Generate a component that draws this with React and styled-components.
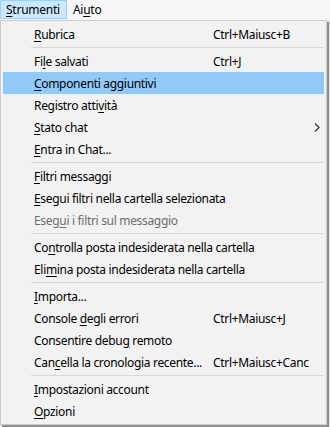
import React from "react";
import styled, { createGlobalStyle } from "styled-components";

const Global = createGlobalStyle`
  html, body { margin: 0; padding: 0; background: #ffffff; }
  body { font-family: "Noto Sans", "Open Sans", sans-serif; font-size: 12px; color: #000; }
`;

const Page = styled.div`
  width: 330px;
  height: 427px;
  overflow: hidden;
  background: #f0f0f0;
`;

const MenuBar = styled.div`
  display: flex;
  height: 20px;
  background: #f5f6f7;
  align-items: stretch;
`;

const BarItem = styled.div`
  display: flex;
  align-items: center;
  padding: 0 6px 0 5px;
  height: 19px;
  box-sizing: border-box;
  background: ${(p) => (p.$active ? "#cce8ff" : "transparent")};
  border: 1px solid ${(p) => (p.$active ? "#99d1ff" : "transparent")};
  letter-spacing: -0.25px;
`;

const Panel = styled.div`
  width: 327px;
  box-sizing: border-box;
  background: #f2f2f2;
  border: 1px solid #cccccc;
  padding: 2px 2px;
  box-shadow: 2px 2px 1px rgba(0, 0, 0, 0.4);
`;

const Item = styled.div`
  display: grid;
  grid-template-columns: 31px 179px 1fr 16px;
  align-items: center;
  height: 22px;
  color: ${(p) => (p.$disabled ? "#6d6d6d" : "#000")};
  background: ${(p) => (p.$hl ? "#91c9f7" : "transparent")};
  letter-spacing: -0.32px;
  white-space: nowrap;
`;

const Label = styled.span`
  grid-column: 2;
  overflow: visible;
`;

const Shortcut = styled.span`
  grid-column: 3;
`;

const Arrow = styled.span`
  grid-column: 4;
  display: flex;
  align-items: center;
  padding-left: 6px;
`;

const Sep = styled.div`
  height: 5px;
  display: flex;
  align-items: flex-start;
  padding: 2px 0 0 28px;
  box-sizing: border-box;
  &::after {
    content: "";
    flex: 1;
    height: 1px;
    background: #d7d7d7;
  }
`;

const U = styled.span`
  text-decoration: underline;
  text-underline-offset: 2px;
`;

const items = [
  { l: ["", "R", "ubrica"], s: "Ctrl+Maiusc+B" },
  "sep",
  { l: ["Fi", "l", "e salvati"], s: "Ctrl+J" },
  { l: ["", "C", "omponenti aggiuntivi"], hl: true },
  { l: ["Registro atti", "v", "ità"] },
  { l: ["", "S", "tato chat"], arrow: true },
  { l: ["", "E", "ntra in Chat..."] },
  "sep",
  { l: ["", "F", "iltri messaggi"] },
  { l: ["", "E", "segui filtri nella cartella selezionata"] },
  { l: ["Eseg", "u", "i i filtri sul messaggio"], d: true },
  "sep",
  { l: ["Co", "n", "trolla posta indesiderata nella cartella"] },
  { l: ["Eli", "m", "ina posta indesiderata nella cartella"] },
  "sep",
  { l: ["", "I", "mporta..."] },
  { l: ["Console ", "d", "egli errori"], s: "Ctrl+Maiusc+J" },
  { l: ["Consentire debu", "g", " remoto"] },
  { l: ["Can", "c", "ella la cronologia recente..."], s: "Ctrl+Maiusc+Canc" },
  "sep",
  { l: ["", "I", "mpostazioni account"] },
  { l: ["", "O", "pzioni"] },
];

const Chevron = () => (
  <svg width="6" height="9" viewBox="0 0 6 9">
    <path d="M1 0.5 L5 4.5 L1 8.5" fill="none" stroke="#333" strokeWidth="1.2" />
  </svg>
);

export default function App() {
  return (
    <Page>
      <Global />
      <MenuBar>
        <BarItem $active>
          <U>S</U>trumenti
        </BarItem>
        <BarItem>
          Ai<U>u</U>to
        </BarItem>
      </MenuBar>
      <Panel>
        {items.map((it, i) =>
          it === "sep" ? (
            <Sep key={i} />
          ) : (
            <Item key={i} $hl={it.hl} $disabled={it.d}>
              <Label>
                {it.l[0]}
                <U>{it.l[1]}</U>
                {it.l[2]}
              </Label>
              {it.s && <Shortcut>{it.s}</Shortcut>}
              {it.arrow && (
                <Arrow>
                  <Chevron />
                </Arrow>
              )}
            </Item>
          )
        )}
      </Panel>
    </Page>
  );
}
